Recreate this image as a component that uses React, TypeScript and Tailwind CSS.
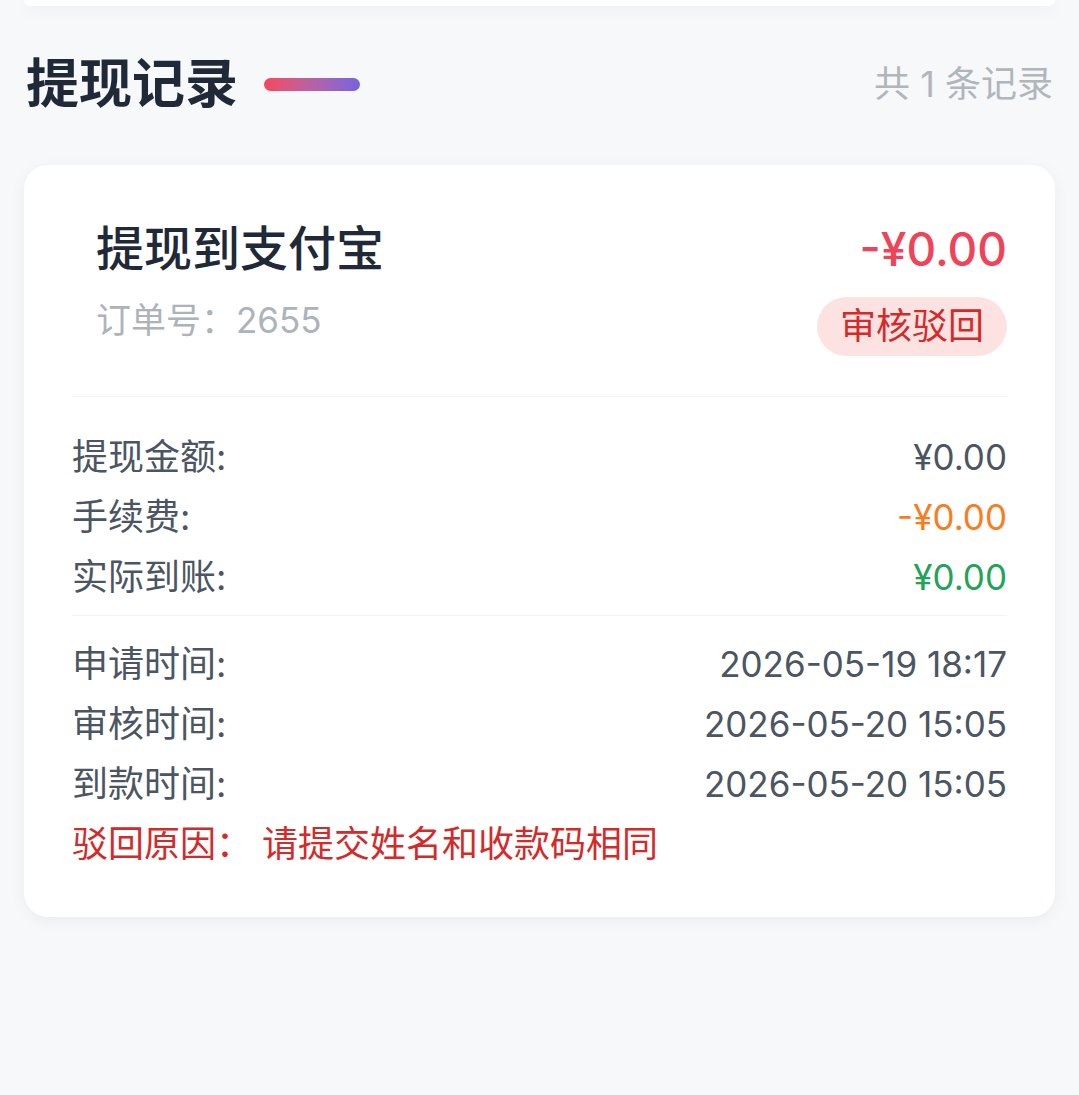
import React from 'react';

const font = { fontFamily: 'Inter, "Noto Sans CJK SC", "Noto Sans", sans-serif' };

interface RowProps {
  label: string;
  value: string;
  valueClass?: string;
}

const Row: React.FC<RowProps> = ({ label, value, valueClass = 'text-[#4b5563]' }) => (
  <div className="flex items-center justify-between h-[60px] leading-[60px]">
    <span className="text-[36px] text-[#4b5563]">{label}</span>
    <span className={`text-[35px] ${valueClass}`}>{value}</span>
  </div>
);

const App: React.FC = () => {
  return (
    <div className="min-h-screen bg-[#f7f8fa]" style={font}>
      {/* bottom edge of the card above */}
      <div className="mx-6 h-[6px] bg-white rounded-b-3xl shadow-[0_4px_14px_rgba(0,0,0,0.06)]" />

      {/* Section header */}
      <div className="flex items-center justify-between px-[26px] mt-[46px]">
        <div className="flex items-center">
          <h1 className="text-[53px] leading-[64px] font-bold text-[#1f2937]">提现记录</h1>
          <div className="ml-[26px] w-[96px] h-[13px] rounded-full bg-gradient-to-r from-[#f5455c] to-[#7462e0]" />
        </div>
        <span className="text-[36px] text-[#b1b5bc]">共 1 条记录</span>
      </div>

      {/* Record card */}
      <div className="mx-6 mt-[49px] bg-white rounded-[24px] shadow-[0_4px_16px_rgba(0,0,0,0.05)] px-12 pt-[55px] pb-[43px]">
        <div className="flex justify-between pl-6 pb-10 border-b border-[#f3f4f6]">
          <div>
            <div className="text-[48px] leading-[58px] font-medium text-[#1f2937]">提现到支付宝</div>
            <div className="mt-[18px] text-[35px] leading-[48px] text-[#adb3bb]">订单号：2655</div>
          </div>
          <div className="flex flex-col items-end">
            <div className="text-[46px] leading-[58px] font-medium text-[#f0435a]">-¥0.00</div>
            <div className="mt-[19px] h-[59px] px-[23px] rounded-full bg-[#fde2e2] text-[36px] leading-[59px] text-[#d42a2a]">
              审核驳回
            </div>
          </div>
        </div>

        <div className="pt-[30px] pb-2 border-b border-[#f3f4f6]">
          <Row label="提现金额:" value="¥0.00" />
          <Row label="手续费:" value="-¥0.00" valueClass="text-[#f97d1f]" />
          <Row label="实际到账:" value="¥0.00" valueClass="text-[#22a35a]" />
        </div>

        <div className="pt-[18px]">
          <Row label="申请时间:" value="2026-05-19 18:17" />
          <Row label="审核时间:" value="2026-05-20 15:05" />
          <Row label="到款时间:" value="2026-05-20 15:05" />
          <div className="flex items-center h-[60px] text-[36px] leading-[60px] text-[#d42a2a]">
            <span>驳回原因：</span>
            <span className="ml-[10px]">请提交姓名和收款码相同</span>
          </div>
        </div>
      </div>
    </div>
  );
};

export default App;
